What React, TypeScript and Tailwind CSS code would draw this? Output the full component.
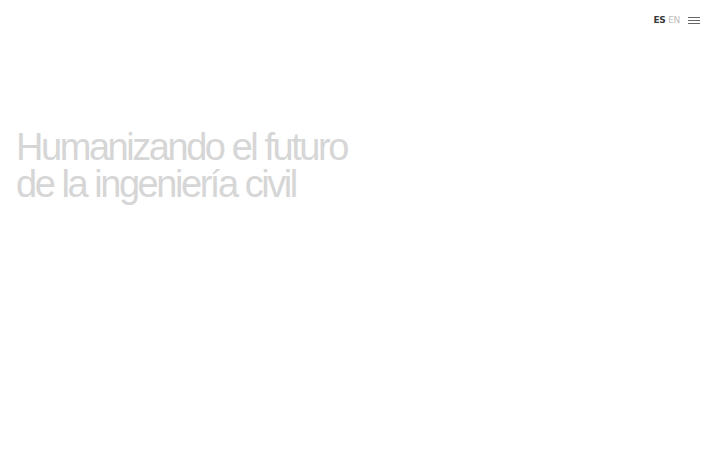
export default function App() {
  return (
    <div className="relative w-[720px] h-[450px] bg-white overflow-hidden" style={{ fontFamily: '"Liberation Sans", Arial, sans-serif' }}>
      <header className="flex justify-end items-center h-[40px] pr-[20px]">
        <div className="flex items-center gap-[3px] text-[9px] leading-none mr-[8px]" style={{ fontFamily: '"DejaVu Sans", sans-serif' }}>
          <span className="font-bold text-[#3a3a3a] tracking-[-0.5px]">ES</span>
          <span className="text-[#bdbdbd] tracking-[-0.3px]">EN</span>
        </div>
        <div className="flex flex-col gap-[2px] w-[12px]">
          <span className="block h-px bg-[#666]" />
          <span className="block h-px bg-[#666]" />
          <span className="block h-px bg-[#666]" />
        </div>
      </header>
      <h1 className="mt-[89px] pl-[16px] text-[38px] leading-[37px] tracking-[-2.45px] text-[#d6d6d6]">
        Humanizando el futuro
        <br />
        de la ingeniería civil
      </h1>
    </div>
  )
}
